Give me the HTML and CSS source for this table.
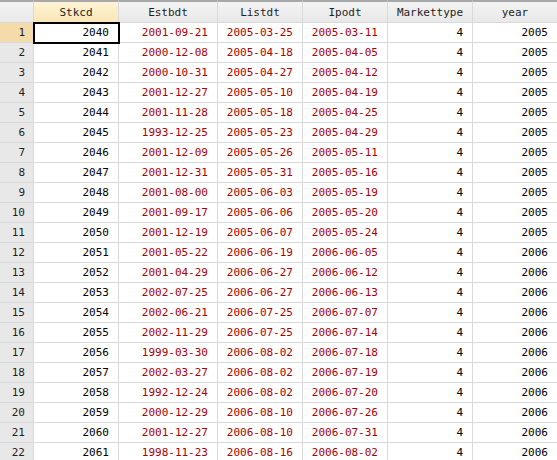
FILE: index.html
```html
<!DOCTYPE html>
<html>
<head>
<meta charset="utf-8">
<link rel="stylesheet" href="styles.css">
</head>
<body>
<div class="grid" id="grid">
  <div class="hd corner"></div>
  <div class="hd sel">Stkcd</div>
  <div class="hd">Estbdt</div>
  <div class="hd">Listdt</div>
  <div class="hd">Ipodt</div>
  <div class="hd">Markettype</div>
  <div class="hd">year</div>

  <div class="rn cur">1</div><div class="c n active">2040</div><div class="c d">2001-09-21</div><div class="c d">2005-03-25</div><div class="c d">2005-03-11</div><div class="c n">4</div><div class="c n">2005</div>
  <div class="rn">2</div><div class="c n">2041</div><div class="c d">2000-12-08</div><div class="c d">2005-04-18</div><div class="c d">2005-04-05</div><div class="c n">4</div><div class="c n">2005</div>
  <div class="rn">3</div><div class="c n">2042</div><div class="c d">2000-10-31</div><div class="c d">2005-04-27</div><div class="c d">2005-04-12</div><div class="c n">4</div><div class="c n">2005</div>
  <div class="rn">4</div><div class="c n">2043</div><div class="c d">2001-12-27</div><div class="c d">2005-05-10</div><div class="c d">2005-04-19</div><div class="c n">4</div><div class="c n">2005</div>
  <div class="rn">5</div><div class="c n">2044</div><div class="c d">2001-11-28</div><div class="c d">2005-05-18</div><div class="c d">2005-04-25</div><div class="c n">4</div><div class="c n">2005</div>
  <div class="rn">6</div><div class="c n">2045</div><div class="c d">1993-12-25</div><div class="c d">2005-05-23</div><div class="c d">2005-04-29</div><div class="c n">4</div><div class="c n">2005</div>
  <div class="rn">7</div><div class="c n">2046</div><div class="c d">2001-12-09</div><div class="c d">2005-05-26</div><div class="c d">2005-05-11</div><div class="c n">4</div><div class="c n">2005</div>
  <div class="rn">8</div><div class="c n">2047</div><div class="c d">2001-12-31</div><div class="c d">2005-05-31</div><div class="c d">2005-05-16</div><div class="c n">4</div><div class="c n">2005</div>
  <div class="rn">9</div><div class="c n">2048</div><div class="c d">2001-08-00</div><div class="c d">2005-06-03</div><div class="c d">2005-05-19</div><div class="c n">4</div><div class="c n">2005</div>
  <div class="rn">10</div><div class="c n">2049</div><div class="c d">2001-09-17</div><div class="c d">2005-06-06</div><div class="c d">2005-05-20</div><div class="c n">4</div><div class="c n">2005</div>
  <div class="rn">11</div><div class="c n">2050</div><div class="c d">2001-12-19</div><div class="c d">2005-06-07</div><div class="c d">2005-05-24</div><div class="c n">4</div><div class="c n">2005</div>
  <div class="rn">12</div><div class="c n">2051</div><div class="c d">2001-05-22</div><div class="c d">2006-06-19</div><div class="c d">2006-06-05</div><div class="c n">4</div><div class="c n">2006</div>
  <div class="rn">13</div><div class="c n">2052</div><div class="c d">2001-04-29</div><div class="c d">2006-06-27</div><div class="c d">2006-06-12</div><div class="c n">4</div><div class="c n">2006</div>
  <div class="rn">14</div><div class="c n">2053</div><div class="c d">2002-07-25</div><div class="c d">2006-06-27</div><div class="c d">2006-06-13</div><div class="c n">4</div><div class="c n">2006</div>
  <div class="rn">15</div><div class="c n">2054</div><div class="c d">2002-06-21</div><div class="c d">2006-07-25</div><div class="c d">2006-07-07</div><div class="c n">4</div><div class="c n">2006</div>
  <div class="rn">16</div><div class="c n">2055</div><div class="c d">2002-11-29</div><div class="c d">2006-07-25</div><div class="c d">2006-07-14</div><div class="c n">4</div><div class="c n">2006</div>
  <div class="rn">17</div><div class="c n">2056</div><div class="c d">1999-03-30</div><div class="c d">2006-08-02</div><div class="c d">2006-07-18</div><div class="c n">4</div><div class="c n">2006</div>
  <div class="rn">18</div><div class="c n">2057</div><div class="c d">2002-03-27</div><div class="c d">2006-08-02</div><div class="c d">2006-07-19</div><div class="c n">4</div><div class="c n">2006</div>
  <div class="rn">19</div><div class="c n">2058</div><div class="c d">1992-12-24</div><div class="c d">2006-08-02</div><div class="c d">2006-07-20</div><div class="c n">4</div><div class="c n">2006</div>
  <div class="rn">20</div><div class="c n">2059</div><div class="c d">2000-12-29</div><div class="c d">2006-08-10</div><div class="c d">2006-07-26</div><div class="c n">4</div><div class="c n">2006</div>
  <div class="rn">21</div><div class="c n">2060</div><div class="c d">2001-12-27</div><div class="c d">2006-08-10</div><div class="c d">2006-07-31</div><div class="c n">4</div><div class="c n">2006</div>
  <div class="rn">22</div><div class="c n">2061</div><div class="c d">1998-11-23</div><div class="c d">2006-08-16</div><div class="c d">2006-08-02</div><div class="c n">4</div><div class="c n">2006</div>
</div>
</body>
</html>
```
FILE: styles.css
```css
html, body {
  margin: 0;
  padding: 0;
  background: #ffffff;
  overflow: hidden;
}
body {
  width: 557px;
  height: 460px;
  font-family: "DejaVu Sans Mono", "Liberation Mono", monospace;
  font-size: 11px;
}
.grid {
  display: grid;
  grid-template-columns: 34px 85px 99px 85px 85px 85px 85px;
  grid-template-rows: 23px;
  grid-auto-rows: 20px;
  width: 558px;
}
.grid > div {
  box-sizing: border-box;
  border-right: 1px solid #d9d9d9;
  border-bottom: 1px solid #d9d9d9;
  display: flex;
  align-items: center;
  white-space: nowrap;
  overflow: hidden;
}
.hd {
  justify-content: center;
  color: #1e1e1e;
  background: linear-gradient(#f3f3f3, #e9e9e9);
  border-top: 2px solid #a8a8a8;
  padding-top: 0;
}
.hd.sel {
  background: linear-gradient(#fdf3d6, #fbe7b6);
}
.rn {
  justify-content: flex-end;
  padding-right: 8px;
  background: #e8e8e8;
  color: #1e1e1e;
}
.rn.cur {
  background: #f5dba9;
}
.c {
  justify-content: flex-end;
  padding-right: 9px;
}
.n { color: #000000; }
.d { color: #a80000; }
.active {
  outline: 2px solid #000000;
  outline-offset: -1px;
  position: relative;
}
```
